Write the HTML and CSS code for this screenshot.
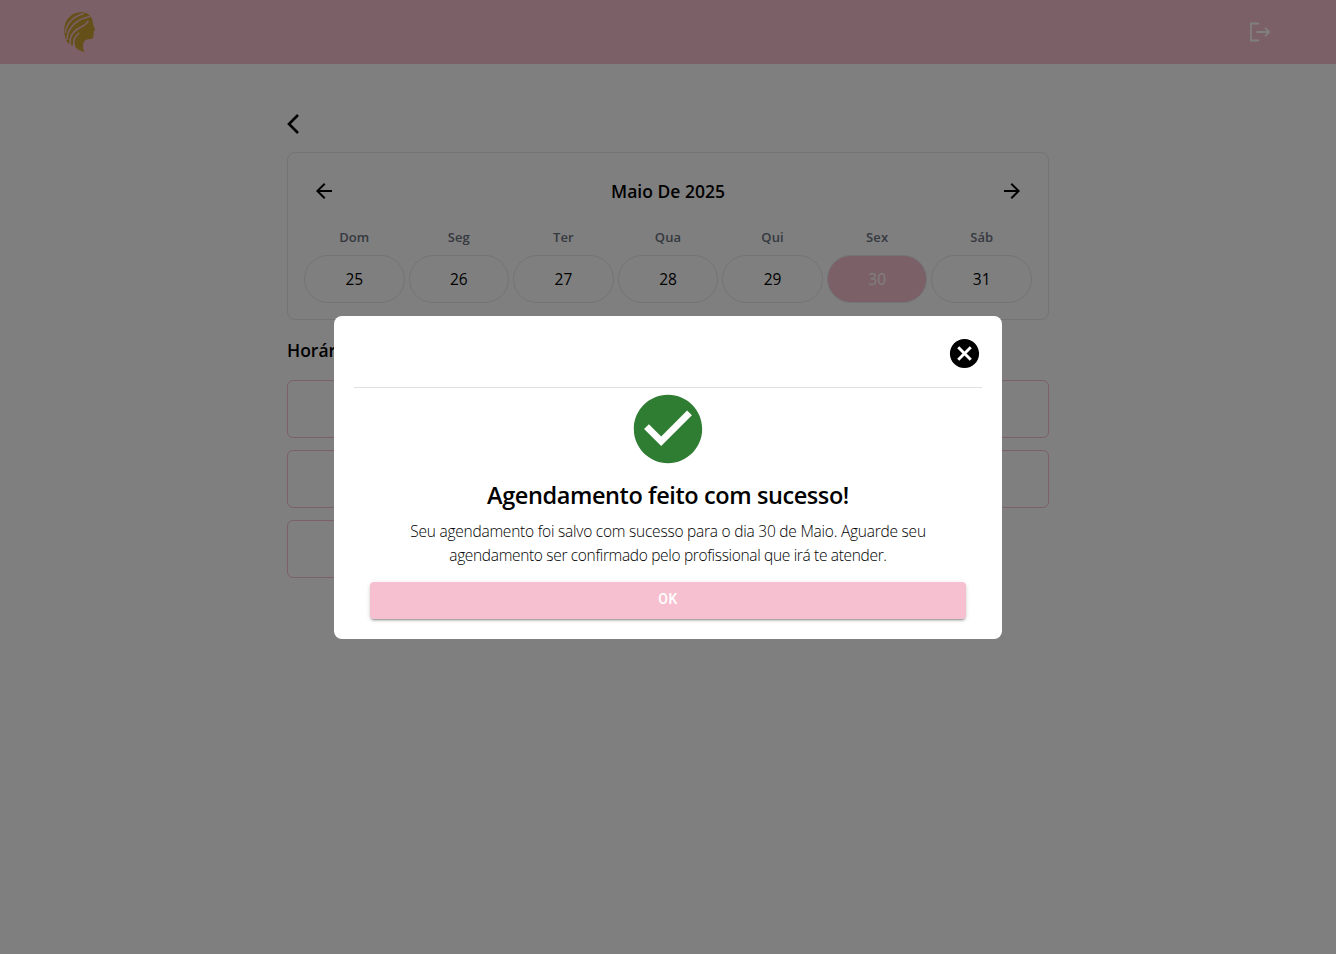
FILE: index.html
```html
<!DOCTYPE html>
<html lang="pt-BR">
<head>
<meta charset="utf-8">
<title>Agendamento</title>
<link rel="stylesheet" href="styles.css">
</head>
<body>
<header class="topbar">
  <svg class="logo" viewBox="0 0 32 42" aria-hidden="true">
    <path d="M3 31C-1.500 22-.5 11 6 5.500C11 1 19 .2 24 3C27 5 28.500 8 29 12C29.200 15 31.200 18 31 19.300C30.700 20.200 29.600 20.200 29.700 21C29.800 22 29.800 23 29.400 23.700C29.500 25.500 29.500 27.300 28 27.800C25.500 28.600 22.500 27.500 20.500 30.200C18.500 33 18.500 37.500 20.500 40.800C15 40 10.500 37 10.500 32.500C9 32.500 8.500 33.500 8.500 35C6.500 34 4.500 33 3 31Z"/>
    <path class="strand" d="M1.500 22C2 12 10 5 20 2.500M3 29C3.500 16 13 8 26 5.500M6.500 34.500C4 24 12 18 18 15.500C21 14 23 12 24.500 10M10 35C8.500 28 12 25 15 22"/>
  </svg>
  <svg class="logout" viewBox="0 0 22 20" aria-hidden="true">
    <path d="M10 1.500H2V18.500H10M7.500 10H20M16 5.800L20.200 10L16 14.200"/>
  </svg>
</header>
<main class="page">
  <svg class="back" viewBox="0 0 14 22" aria-hidden="true"><path d="M12 2L3 11L12 20"/></svg>
  <section class="calendar">
    <div class="month">
      <svg class="arrow" viewBox="0 0 24 24"><path d="M20 11H7.830l5.590-5.590L12 4l-8 8 8 8 1.410-1.410L7.830 13H20z"/></svg>
      <h2 class="month-name">Maio De 2025</h2>
      <svg class="arrow" viewBox="0 0 24 24"><path d="m12 4-1.410 1.410L16.170 11H4v2h12.170l-5.580 5.590L12 20l8-8z"/></svg>
    </div>
    <div class="week">
      <span class="weekday">Dom</span><span class="weekday">Seg</span><span class="weekday">Ter</span><span class="weekday">Qua</span><span class="weekday">Qui</span><span class="weekday">Sex</span><span class="weekday">Sáb</span>
      <span class="day">25</span><span class="day">26</span><span class="day">27</span><span class="day">28</span><span class="day">29</span><span class="day selected">30</span><span class="day">31</span>
    </div>
  </section>
  <h3 class="slots-title">Horários</h3>
  <div class="slots">
    <div class="slot"></div><div class="slot"></div>
    <div class="slot"></div><div class="slot"></div>
    <div class="slot"></div>
  </div>
</main>
<div class="overlay">
  <div class="modal">
    <div class="modal-head">
      <svg class="close" viewBox="0 0 24 24"><path d="M12 2C6.470 2 2 6.470 2 12s4.470 10 10 10 10-4.470 10-10S17.530 2 12 2m5 13.590L15.590 17 12 13.410 8.410 17 7 15.590 10.590 12 7 8.410 8.410 7 12 10.590 15.590 7 17 8.410 13.410 12z"/></svg>
    </div>
    <div class="modal-body">
      <svg class="success" viewBox="0 0 24 24"><path d="M12 2C6.480 2 2 6.480 2 12s4.480 10 10 10 10-4.480 10-10S17.520 2 12 2m-2 15-5-5 1.410-1.410L10 14.170l7.590-7.590L19 8z"/></svg>
      <h1 class="modal-title">Agendamento feito com sucesso!</h1>
      <p class="message"><span class="line-one">Seu agendamento foi salvo com sucesso para o dia 30 de Maio. Aguarde seu</span><br><span class="line-two">agendamento ser confirmado pelo profissional que irá te atender.</span></p>
      <button class="ok">OK</button>
    </div>
  </div>
</div>
</body>
</html>
```
FILE: styles.css
```css
* { box-sizing: border-box; }
body {
  margin: 0;
  min-height: 954px;
  background: #fff;
  color: #000;
  font-family: "Open Sans", "Noto Sans", sans-serif;
}
h1, h2, h3, p { margin: 0; white-space: nowrap; }
svg { display: block; flex: none; }
.topbar {
  height: 64px;
  padding: 0 65px 0 64px;
  display: flex;
  align-items: center;
  justify-content: space-between;
  background: #f8c0d0;
}
.logo { width: 32px; height: 42px; fill: #c8a030; }
.strand { fill: none; stroke: #f8c0d0; stroke-width: 1.5; }
.logout { width: 22px; height: 20px; fill: none; stroke: #fff; stroke-width: 1.8; }
.page { width: 762px; margin: 0 auto; padding-top: 49px; }
.back { width: 14px; height: 22px; margin-left: -1px; fill: none; stroke: #000; stroke-width: 2.6; }
.calendar {
  height: 168px;
  margin-top: 17px;
  padding: 23px 16px 16px;
  border: 1px solid #e5e7eb;
  border-radius: 8px;
}
.month { display: flex; align-items: center; justify-content: space-between; height: 30px; padding: 0 8px; }
.arrow { width: 24px; height: 24px; }
.month-name { padding-bottom: 1px; font-size: 17.5px; font-weight: 600; letter-spacing: 0; }
.week { display: grid; grid-template-columns: repeat(7, 1fr); column-gap: 4px; margin-top: 20px; text-align: center; }
.weekday { height: 29px; line-height: 22px; font-size: 13px; font-weight: 600; letter-spacing: 0.1px; color: #6b7280; }
.day {
  height: 48px;
  line-height: 47px;
  border: 1px solid #e5e7eb;
  border-radius: 24px;
  font-size: 15.5px;
}
.day.selected { background: #f8c0d0; color: #fff; }
.slots-title { margin-top: 17px; font-size: 17.5px; line-height: 26px; font-weight: 600; }
.slots { display: grid; grid-template-columns: 1fr 1fr; gap: 12px; margin-top: 17px; }
.slot { height: 58px; border: 1px solid #f8c0d0; border-radius: 6px; }
.overlay {
  position: fixed;
  inset: 0;
  display: flex;
  align-items: center;
  justify-content: center;
  background: rgba(0, 0, 0, 0.5);
}
.modal { width: 668px; height: 323px; padding: 20px; border-radius: 8px; background: #fff; }
.modal-head { display: flex; justify-content: flex-end; height: 52px; border-bottom: 1px solid #e0e0e0; }
.close { width: 35px; height: 35px; }
.modal-body { display: flex; flex-direction: column; align-items: center; padding: 0 16px; }
.success { width: 82px; height: 82px; fill: #2e7d32; }
.modal-title { margin-top: 9px; font-size: 23.5px; line-height: 32px; font-weight: 600; letter-spacing: -0.41px; }
.message { margin-top: 8px; font-size: 15.5px; line-height: 24px; font-weight: 300; text-align: center; }
.line-one { letter-spacing: -0.23px; }
.line-two { letter-spacing: -0.33px; }
.ok {
  width: 100%;
  height: 37px;
  margin-top: 15px;
  padding: 0 0 3px;
  border: 0;
  border-radius: 4px;
  background: #f7c0d0;
  color: #fff;
  font: 500 14px Roboto, sans-serif;
  letter-spacing: 0.4px;
  box-shadow: 0 3px 1px -2px rgba(0, 0, 0, .2), 0 2px 2px rgba(0, 0, 0, .14), 0 1px 5px rgba(0, 0, 0, .12);
}
```
